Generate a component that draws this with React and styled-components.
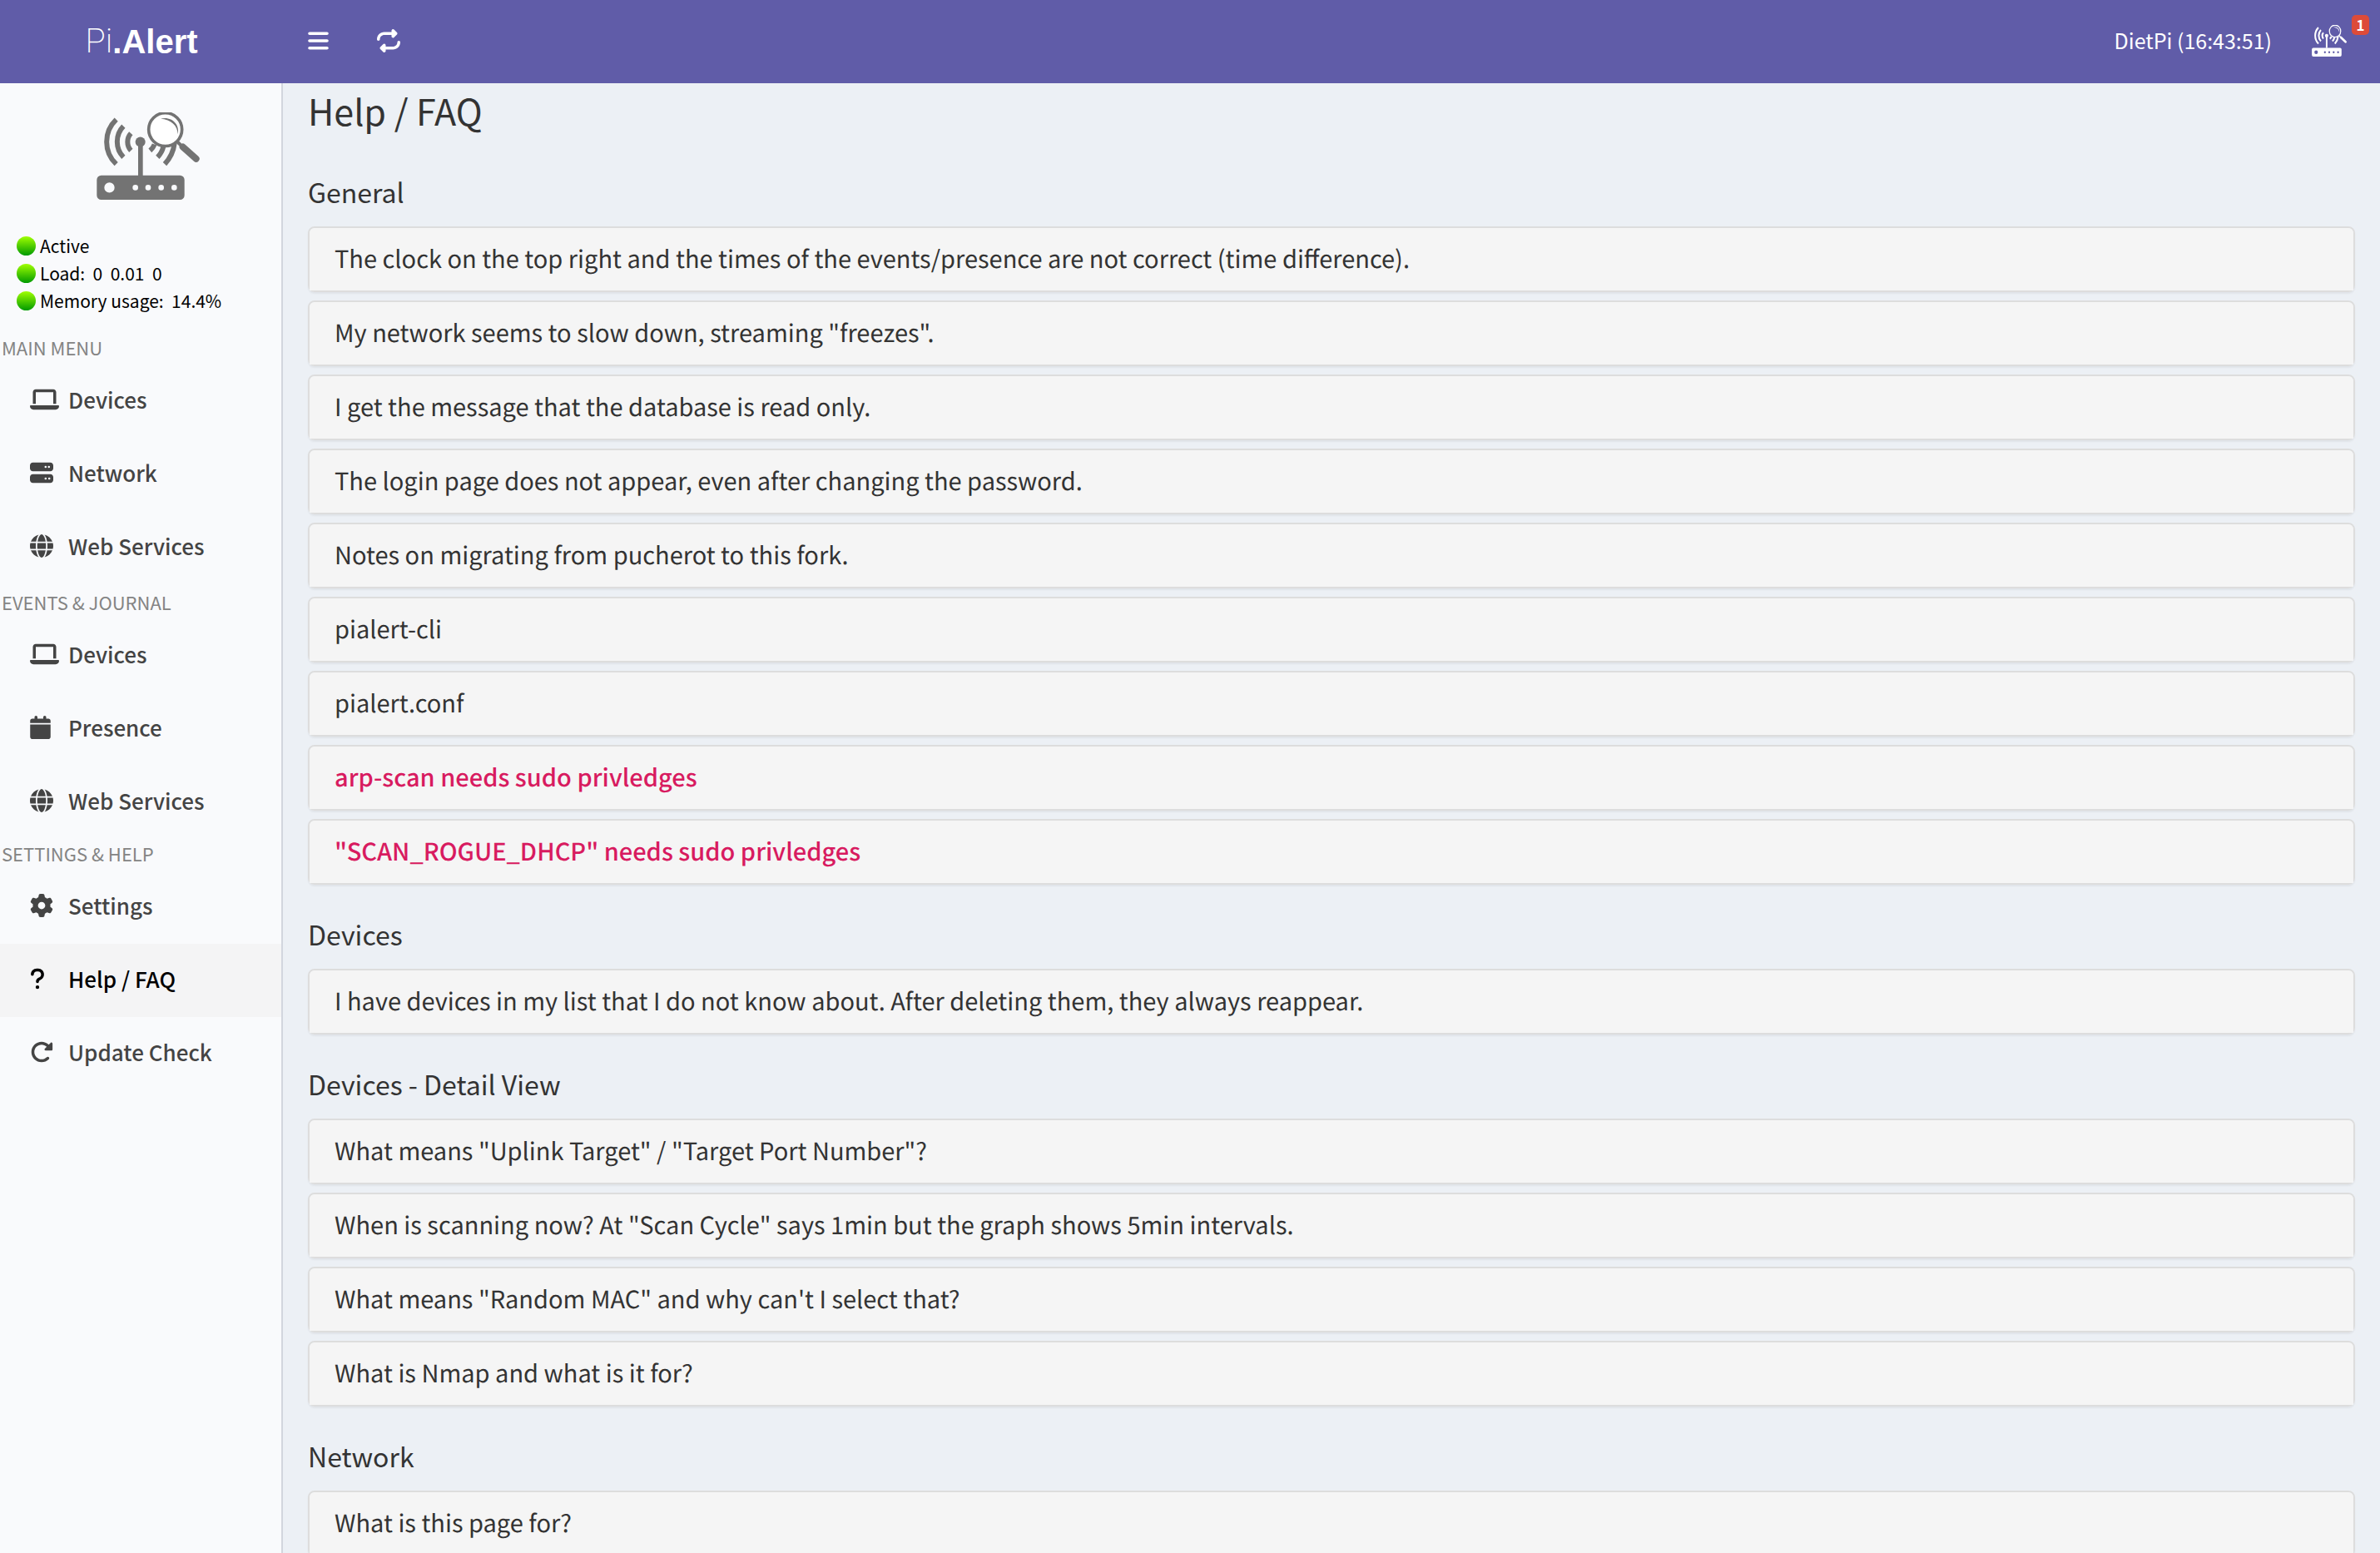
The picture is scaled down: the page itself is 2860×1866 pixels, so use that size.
import React from "react";
import styled, { createGlobalStyle } from "styled-components";
import {
  FaBars,
  FaRepeat,
  FaLaptop,
  FaServer,
  FaGlobe,
  FaCalendar,
  FaGear,
  FaQuestion,
  FaRotateRight,
} from "react-icons/fa6";

const GlobalStyle = createGlobalStyle`
  * { box-sizing: border-box; }
  body {
    margin: 0;
    background: #ecf0f5;
    color: #333;
    font-family: "Noto Sans CJK JP", "Noto Sans", sans-serif;
  }
  a { color: inherit; text-decoration: none; }
`;

const Page = styled.div`
  display: flex;
  flex-direction: column;
  height: 100vh;
`;

const TopBar = styled.header`
  display: flex;
  flex: none;
  height: 100px;
  background: #605ca8;
  color: #fff;
`;

const Brand = styled.a`
  display: flex;
  align-items: center;
  justify-content: center;
  width: 340px;
  font: bold 40px/100px "Liberation Sans", Arial, sans-serif;
`;

const BrandLight = styled.span`
  font-family: Roboto, sans-serif;
  font-weight: 200;
`;

const Nav = styled.nav`
  display: flex;
  flex: 1;
  align-items: center;
  justify-content: space-between;
  padding: 0 40px 2px 30px;
`;

const NavGroup = styled.div`
  display: flex;
  align-items: center;
  gap: ${(p) => p.$gap}px;
`;

const IconButton = styled.button`
  display: flex;
  padding: 0;
  border: 0;
  background: none;
  color: inherit;
  cursor: pointer;

  svg {
    width: ${(p) => p.$width}px;
    height: 28px;
  }
`;

const Clock = styled.span`
  padding-bottom: 2px;
  font-size: 25px;
  font-weight: 400;
  line-height: 40px;
`;

const AlertLink = styled.a`
  position: relative;
  display: flex;
`;

const Badge = styled.span`
  position: absolute;
  top: -12px;
  right: -27px;
  width: 21px;
  border-radius: 5px;
  background: #dd4b39;
  font-size: 17px;
  font-weight: 700;
  line-height: 24px;
  text-align: center;
`;

const Body = styled.div`
  display: flex;
  flex: 1;
  min-height: 0;
`;

const Sidebar = styled.aside`
  flex: none;
  width: 340px;
  border-right: 2px solid #d2d6de;
  background: #f9fafc;
`;

const LogoPanel = styled.div`
  display: flex;
  justify-content: center;
  padding: 35px 0 0 18px;
  color: #737373;
`;

const StatusList = styled.ul`
  margin: 0;
  padding: 39px 0 22px 20px;
  list-style: none;
`;

const StatusRow = styled.li`
  display: flex;
  align-items: center;
  gap: 5px;
  color: #000;
  font-size: 21px;
  line-height: 33px;
  white-space: pre;
`;

const Dot = styled.span`
  width: 23px;
  height: 23px;
  border-radius: 50%;
  background: linear-gradient(#a0ff00, #009a00);
`;

const MenuGroup = styled.section`
  padding-bottom: ${(p) => p.$after || 0}px;
`;

const MenuHeading = styled.h2`
  margin: 0;
  padding: 0 2px 4px;
  color: #848484;
  font-size: 22px;
  font-weight: 400;
  line-height: 34px;
`;

const MenuItem = styled.a`
  display: flex;
  align-items: center;
  height: 88px;
  padding: 0 0 4px 36px;
  background: ${(p) => (p.$active ? "#f4f4f5" : "transparent")};
  color: ${(p) => (p.$active ? "#000" : "#444")};
  font-size: 26px;
  font-weight: 500;
  line-height: 40px;
`;

const MenuIcon = styled.span`
  display: flex;
  width: 46px;

  svg {
    width: ${(p) => p.$width}px;
    height: 28px;
  }
`;

const Content = styled.main`
  flex: 1;
  min-width: 0;
  padding: 0 30px;
  overflow-y: auto;
  scrollbar-width: none;
`;

const PageTitle = styled.h1`
  margin: 0 0 7px;
  font-size: 43px;
  font-weight: 400;
  line-height: 64px;
`;

const SectionTitle = styled.h3`
  margin: 0;
  padding: 39px 0 22px;
  font-size: 32px;
  font-weight: 400;
  line-height: 40px;
`;

const Panels = styled.div`
  display: flex;
  flex-direction: column;
  gap: 10px;
`;

const Panel = styled.h4`
  margin: 0;
  border: 2px solid #ddd;
  border-radius: 8px;
  box-shadow: 0 2px 2px rgba(0, 0, 0, 0.05);
  color: ${(p) => (p.$alert ? "#d81b60" : "#333")};
  font-size: 29px;
  font-weight: ${(p) => (p.$alert ? 500 : 400)};
  line-height: 39px;
  text-rendering: geometricPrecision;

  a {
    display: block;
    padding: 17px 30px 19px;
    border-radius: 6px 6px 0 0;
    background: #f5f5f5;
  }
`;

function RouterLogo({ width, height, lens }) {
  return (
    <svg
      width={width}
      height={height}
      viewBox="50 42 372 316"
      preserveAspectRatio="none"
      fill="none"
      stroke="currentColor"
      aria-hidden="true"
    >
      <path
        fill="currentColor"
        stroke="none"
        fillRule="evenodd"
        d="M67 270H351a16 16 0 0 1 16 16V342a16 16 0 0 1-16 16H67a16 16 0 0 1-16-16V286a16 16 0 0 1 16-16ZM78 314a18.500 18.500 0 1 0 37 0a18.500 18.500 0 1 0-37 0ZM180 314a10 10 0 1 0 20 0a10 10 0 1 0-20 0ZM226 314a10 10 0 1 0 20 0a10 10 0 1 0-20 0ZM273 314a10 10 0 1 0 20 0a10 10 0 1 0-20 0ZM320 314a10 10 0 1 0 20 0a10 10 0 1 0-20 0Z"
      />
      <path strokeWidth="17" d="M208.500 150V272" />
      <circle cx="208" cy="149" r="18" fill="currentColor" stroke="none" />
      <path
        strokeWidth="18"
        d="M121 68C75 112 75 185 121 229M147 92C117 123 117 174 147 204M174 118C158 135 158 163 174 180M243 180Q254 171 259 158M270 204Q286 188 291 166M296 229Q326 197 331 154"
      />
      <circle cx="298" cy="104" r="60" fill={lens} strokeWidth="11" />
      <path
        fill="currentColor"
        stroke="none"
        d="M281 65C318 54 352 84 343 121C343 90 318 67 281 65Z"
      />
      <path strokeWidth="12" d="M341 148L356 163" />
      <path strokeWidth="24" strokeLinecap="round" d="M361 167L409 210" />
    </svg>
  );
}

const statuses = ["Active", "Load:  0  0.01  0", "Memory usage:  14.4%"];

const menu = [
  {
    title: "MAIN MENU",
    after: 4,
    items: [
      ["Devices", FaLaptop, 35],
      ["Network", FaServer, 28],
      ["Web Services", FaGlobe, 28],
    ],
  },
  {
    title: "EVENTS & JOURNAL",
    items: [
      ["Devices", FaLaptop, 35],
      ["Presence", FaCalendar, 25],
      ["Web Services", FaGlobe, 28],
    ],
  },
  {
    title: "SETTINGS & HELP",
    items: [
      ["Settings", FaGear, 28],
      ["Help / FAQ", FaQuestion, 18],
      ["Update Check", FaRotateRight, 28],
    ],
  },
];

const sections = [
  {
    title: "General",
    questions: [
      "The clock on the top right and the times of the events/presence are not correct (time difference).",
      'My network seems to slow down, streaming "freezes".',
      "I get the message that the database is read only.",
      "The login page does not appear, even after changing the password.",
      "Notes on migrating from pucherot to this fork.",
      "pialert-cli",
      "pialert.conf",
    ],
    alerts: [
      "arp-scan needs sudo privledges",
      '"SCAN_ROGUE_DHCP" needs sudo privledges',
    ],
  },
  {
    title: "Devices",
    questions: [
      "I have devices in my list that I do not know about. After deleting them, they always reappear.",
    ],
  },
  {
    title: "Devices - Detail View",
    questions: [
      'What means "Uplink Target" / "Target Port Number"?',
      'When is scanning now? At "Scan Cycle" says 1min but the graph shows 5min intervals.',
      'What means "Random MAC" and why can\'t I select that?',
      "What is Nmap and what is it for?",
    ],
  },
  { title: "Network", questions: ["What is this page for?"] },
];

export default function App() {
  return (
    <Page>
      <GlobalStyle />
      <TopBar>
        <Brand href="#">
          <BrandLight>Pi</BrandLight>.Alert
        </Brand>
        <Nav>
          <NavGroup $gap={58}>
            <IconButton type="button" aria-label="Toggle navigation" $width={25}>
              <FaBars />
            </IconButton>
            <IconButton type="button" aria-label="Reload" $width={28}>
              <FaRepeat />
            </IconButton>
          </NavGroup>
          <NavGroup $gap={48}>
            <Clock>DietPi (16:43:51)</Clock>
            <AlertLink href="#" aria-label="Reports">
              <RouterLogo width={42} height={38} lens="none" />
              <Badge>1</Badge>
            </AlertLink>
          </NavGroup>
        </Nav>
      </TopBar>
      <Body>
        <Sidebar>
          <LogoPanel>
            <RouterLogo width={124} height={105} lens="#fff" />
          </LogoPanel>
          <StatusList>
            {statuses.map((text) => (
              <StatusRow key={text}>
                <Dot />
                {text}
              </StatusRow>
            ))}
          </StatusList>
          <nav>
            {menu.map((group) => (
              <MenuGroup key={group.title} $after={group.after}>
                <MenuHeading>{group.title}</MenuHeading>
                {group.items.map(([label, Icon, width]) => (
                  <MenuItem key={label} href="#" $active={label === "Help / FAQ"}>
                    <MenuIcon $width={width}>
                      <Icon />
                    </MenuIcon>
                    {label}
                  </MenuItem>
                ))}
              </MenuGroup>
            ))}
          </nav>
        </Sidebar>
        <Content>
          <PageTitle>Help / FAQ</PageTitle>
          {sections.map(({ title, questions, alerts = [] }) => (
            <section key={title}>
              <SectionTitle>{title}</SectionTitle>
              <Panels>
                {questions.map((text) => (
                  <Panel key={text}>
                    <a href="#">{text}</a>
                  </Panel>
                ))}
                {alerts.map((text) => (
                  <Panel key={text} $alert>
                    <a href="#">{text}</a>
                  </Panel>
                ))}
              </Panels>
            </section>
          ))}
        </Content>
      </Body>
    </Page>
  );
}
